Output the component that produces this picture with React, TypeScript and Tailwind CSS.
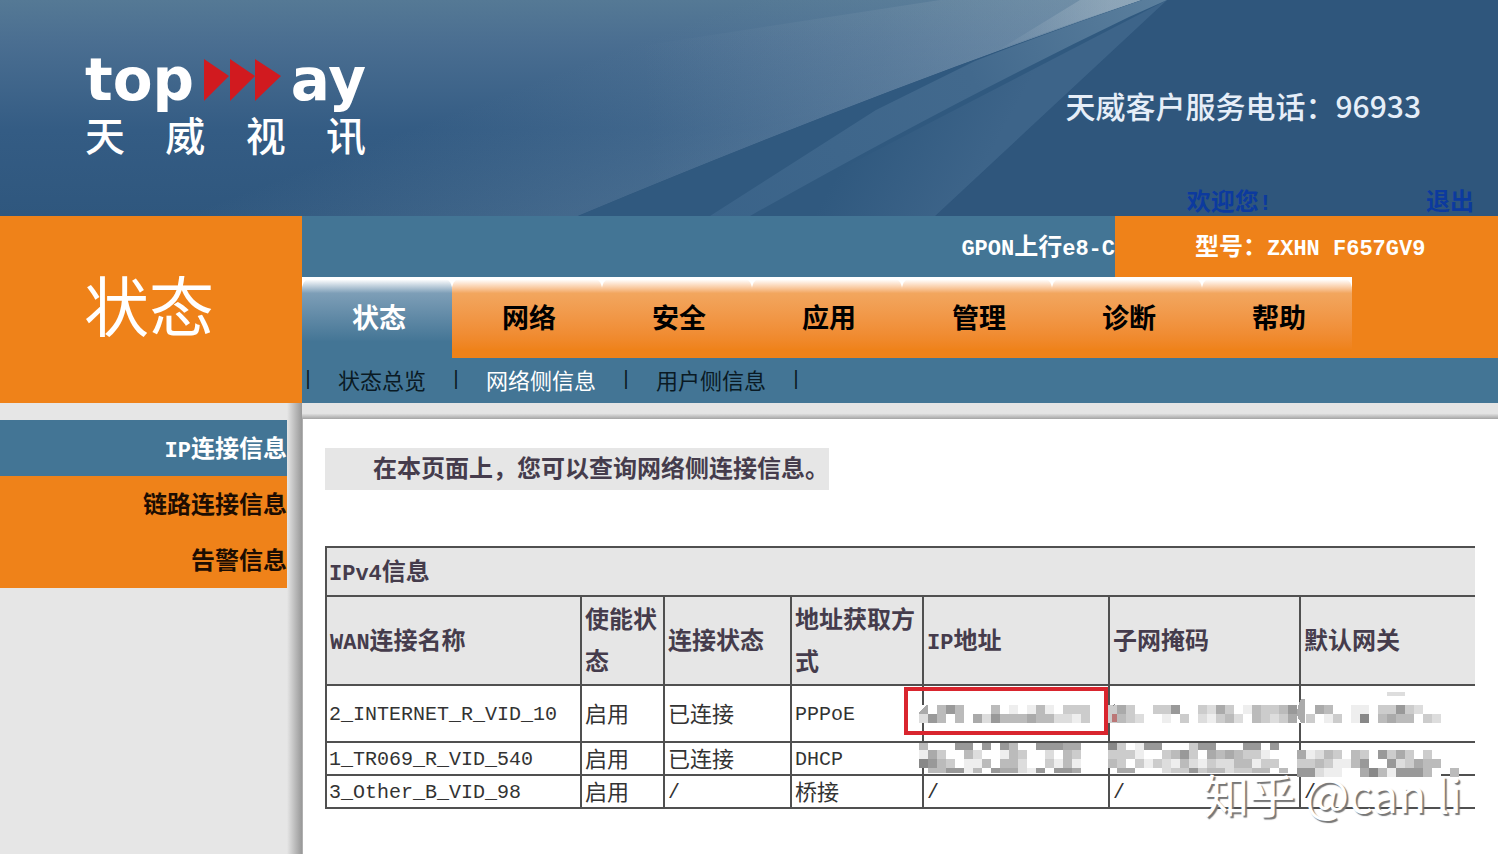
import React from "react";

const ORANGE_TABS = ["网络", "安全", "应用", "管理", "诊断", "帮助"];
const SUB_TABS = ["状态总览", "网络侧信息", "用户侧信息"];
const COLUMNS = ["WAN连接名称", "使能状态", "连接状态", "地址获取方式", "IP地址", "子网掩码", "默认网关"];

const ROWS = [
  { name: "2_INTERNET_R_VID_10", cells: ["启用", "已连接", "PPPoE", "", "", ""], height: "h-[57px]" },
  { name: "1_TR069_R_VID_540", cells: ["启用", "已连接", "DHCP", "", "", ""], height: "h-[33px]" },
  { name: "3_Other_B_VID_98", cells: ["启用", "/", "桥接", "/", "/", "/"], height: "h-[31px]" },
];

/* Each character is the grey level of one redaction tile. */
const TILES = [
  { y: 0, h: 9, data: "afb9bfffbfefebefcccf " + "cacffcc9ffcdacfebccb9ffabffeefcc9cdff" },
  { y: 9, h: 9, data: "d9bfbfad9bbbabbddecf " + "cbcdffefcfdecbdfbcdcafcfecfe8fbabbfcd" },
  { y: 38, h: 7, data: "bfff99f9f9bff999aa   " + "8cfe99fffc99fff99f9f" },
  { y: 45, h: 9, data: "eacffbdffebcffdfbc   " + "ccceffcb9cfababccefffaedbcfbcf9cacfcf" },
  { y: 54, h: 9, data: "89bcfeebfbbdffcebe   " + "bcfcecdebdecddbbeccffccbceeb9ff9dcabb" },
  { y: 63, h: 5, data: " bb99ebf9aade9f99a    " + "aafffdcc9cbbdccbbfb" },
  { y: 63, h: 9, data: "                                          " + "99deeffa8be999bf b" },
];

/** Sets Latin runs in the monospaced face, a step smaller than the Chinese text. */
function Mixed({ text, bold = false }: { text: string; bold?: boolean }) {
  const parts = text.split(/([\x20-\x7e]+)/).filter(Boolean);
  return (
    <span
      className={
        bold
          ? "block text-[24px] leading-[inherit] font-bold"
          : "block text-[22px] leading-[inherit]"
      }
    >
      {parts.map((part, i) =>
        /^[\x20-\x7e]/.test(part) ? (
          <span
            key={i}
            className={
              bold
                ? "font-['Liberation_Mono',monospace] text-[22px] leading-none"
                : "font-['Liberation_Mono',monospace] text-[20px] leading-none"
            }
          >
            {part}
          </span>
        ) : (
          <React.Fragment key={i}>{part}</React.Fragment>
        ),
      )}
    </span>
  );
}

function HeaderArt() {
  return (
    <svg
      className="absolute inset-0 h-full w-full"
      viewBox="0 0 1498 216"
      preserveAspectRatio="none"
      aria-hidden="true"
    >
      <defs>
        <linearGradient id="sky" x1="0" y1="0" x2="0" y2="1">
          <stop offset="0" stopColor="#557995" />
          <stop offset="0.2" stopColor="#4a6e91" />
          <stop offset="0.6" stopColor="#345c84" />
          <stop offset="1" stopColor="#2f577e" />
        </linearGradient>
        <linearGradient id="glow" gradientUnits="userSpaceOnUse" x1="640" y1="60" x2="1120" y2="30">
          <stop offset="0" stopColor="#a4b6c4" stopOpacity="0" />
          <stop offset="0.5" stopColor="#a4b6c4" stopOpacity="0.12" />
          <stop offset="1" stopColor="#a4b6c4" stopOpacity="0.32" />
        </linearGradient>
        <linearGradient id="edge" gradientUnits="userSpaceOnUse" x1="712" y1="14" x2="760" y2="140">
          <stop offset="0" stopColor="#7f9cb5" stopOpacity="0" />
          <stop offset="1" stopColor="#7f9cb5" stopOpacity="0.25" />
        </linearGradient>
        <linearGradient id="flare" gradientUnits="userSpaceOnUse" x1="1000" y1="20" x2="1110" y2="10">
          <stop offset="0" stopColor="#b5c4cf" stopOpacity="0.05" />
          <stop offset="1" stopColor="#b5c4cf" stopOpacity="0.4" />
        </linearGradient>
        <linearGradient id="beam" gradientUnits="userSpaceOnUse" x1="700" y1="216" x2="1160" y2="0">
          <stop offset="0" stopColor="#3a6389" />
          <stop offset="0.6" stopColor="#42698d" />
          <stop offset="1" stopColor="#5b7f9d" />
        </linearGradient>
        <linearGradient id="beam2" gradientUnits="userSpaceOnUse" x1="850" y1="150" x2="960" y2="210">
          <stop offset="0" stopColor="#30597f" />
          <stop offset="1" stopColor="#3d6489" />
        </linearGradient>
      </defs>
      <rect width="1498" height="216" fill="#2f567c" />
      <path d="M0 0H1142Q880 90 578 216H0Z" fill="url(#sky)" />
      <path d="M640 46L940 0H1142Q880 90 578 216Z" fill="url(#glow)" />
      <path d="M0 0H1142Q880 90 578 216H0Z" fill="url(#edge)" />
      <path d="M1000 49L1080 0H1142Q1080 20 1000 49Z" fill="url(#flare)" />
      <path d="M578 216Q880 90 1142 0H1167L935 216Z" fill="#30597f" />
      <path d="M750 216L1167 0L935 216Z" fill="url(#beam2)" />
      <path d="M710 216L876 110L975 61Q1060 28 1142 0H1167L1129 17Q950 103 750 216Z" fill="url(#beam)" />
    </svg>
  );
}

function Logo() {
  return (
    <div className="flex w-[281px] flex-col text-white">
      <div className="flex h-[60px] items-center justify-between font-['DejaVu_Sans',sans-serif] text-[58px] leading-[60px] font-bold">
        <span>top</span>
        <svg className="h-[42px] w-[78px] shrink-0" viewBox="0 0 78 42" aria-hidden="true">
          <path d="M1 0L26 17L1 42ZM27 0L52 17L27 42ZM52 0L78 17L52 42Z" fill="#d11a1f" />
        </svg>
        <span>ay</span>
      </div>
      <div className="flex justify-between text-[40px] leading-[48px] font-medium">
        <span>天</span>
        <span>威</span>
        <span>视</span>
        <span>讯</span>
      </div>
    </div>
  );
}

function Redactions() {
  return (
    <svg
      className="pointer-events-none absolute top-[159px] left-[594px] h-[72px] w-[522px] overflow-visible"
      viewBox="0 0 522 72"
      shapeRendering="crispEdges"
      aria-hidden="true"
    >
      {TILES.map((row, r) =>
        row.data.split("").map((level, c) =>
          level === " " ? null : (
            <rect key={`${r}-${c}`} x={c * 9} y={row.y} width={9} height={row.h} fill={`#${level}${level}${level}`} />
          ),
        ),
      )}
      <path d="M386 -6h-4q-4 8-4 14q0 6 5 10h3z" fill="#aaa" />
      <path d="M198 -4l-4 6v-1z" fill="#888" />
      <rect x="193" y="9" width="5" height="8" fill="#b77" />
      <rect x="468" y="-13" width="18" height="4" fill="#ddd" />
      <path d="M0 0h7L0 8z" fill="#fff" />
    </svg>
  );
}

export default function App() {
  return (
    <div className="relative flex min-h-screen flex-col overflow-hidden bg-[#e6e6e6] font-['Noto_Sans_CJK_SC',sans-serif] text-[#333]">
      <header className="relative h-[216px]">
        <HeaderArt />
        <div className="relative flex h-full flex-col justify-between">
          <div className="flex items-start justify-between pt-[50px] pr-[77px] pl-[85px]">
            <Logo />
            <p className="pt-[34px] text-[30px] leading-[42px] font-medium text-[#e6eef8]">
              天威客户服务电话：96933
            </p>
          </div>
          <div className="flex justify-end gap-[154px] pr-6 leading-6 text-[#0c3a9e]">
            <Mixed text="欢迎您!" bold />
            <a href="#logout">
              <Mixed text="退出" bold />
            </a>
          </div>
        </div>
      </header>

      <div className="grid flex-1 grid-cols-[302px_minmax(0,1fr)] grid-rows-[187px_1fr]">
        <h1 className="flex items-center justify-center bg-[#ef8219] pr-1 pb-3 text-[65px] leading-none font-normal text-white">
          状态
        </h1>

        <div className="flex flex-col bg-[#437595]">
          <div className="flex h-[61px] leading-[58px] text-white">
            <div className="flex-1 text-right">
              <Mixed text="GPON上行e8-C" bold />
            </div>
            <div className="w-[383px] bg-[#ef8219] pl-20">
              <Mixed text="型号：ZXHN F657GV9" bold />
            </div>
          </div>
          <nav className="flex h-[81px] bg-[#ef8219] text-[27px] font-bold">
            <div className="flex bg-white">
              <button className="w-[150px] rounded-t-xl bg-linear-to-b from-white from-3% via-[#7d9eb7] via-20% to-[#437595] to-80% text-white">
                <span className="pl-1">状态</span>
              </button>
              {ORANGE_TABS.map((tab) => (
                <button
                  key={tab}
                  className="w-[150px] rounded-t-xl bg-linear-to-b from-white from-3% via-[#f2a65e] via-20% to-[#ef8219] to-90% text-black"
                >
                  <span className="pl-1">{tab}</span>
                </button>
              ))}
            </div>
          </nav>
          <nav className="flex h-[45px] items-center gap-6 pb-0.5 text-[22px] text-[#0a1a24]">
            <span className="font-['Liberation_Mono',monospace] text-[20px]">|</span>
            {SUB_TABS.map((tab, i) => (
              <React.Fragment key={tab}>
                <a href="#sub" className={i === 1 ? "text-white" : ""}>
                  {tab}
                </a>
                <span className="font-['Liberation_Mono',monospace] text-[20px]">|</span>
              </React.Fragment>
            ))}
          </nav>
        </div>

        <aside className="flex">
          <nav className="flex flex-1 flex-col pt-[17px] text-right leading-[54px]">
            <a href="#ip" className="bg-[#437595] pb-0.5 text-white">
              <Mixed text="IP连接信息" bold />
            </a>
            <a href="#link" className="bg-[#ef8219] pb-0.5 text-[#1c0d02]">
              <Mixed text="链路连接信息" bold />
            </a>
            <a href="#alarm" className="bg-[#ef8219] pb-0.5 text-[#1c0d02]">
              <Mixed text="告警信息" bold />
            </a>
          </nav>
          <div className="w-[15px] bg-linear-to-r from-[#e6e6e6] to-[#989898]" />
        </aside>

        <main className="flex flex-col">
          <div className="h-4 bg-linear-to-b from-[#e4e4e4] from-65% to-[#a4a4a4]" />
          <div className="flex-1 border-l border-[#b0b0b0] bg-white pt-[29px] pr-[23px] pl-[22px]">
            <p className="h-[42px] w-fit bg-[#e6e6e6] pl-12 leading-[38px] text-[#453c4c]">
              <Mixed text="在本页面上，您可以查询网络侧连接信息。" bold />
            </p>
            <div className="relative mt-14">
              <table className="w-full table-fixed border-collapse border-2 border-r-0 border-[#505050] text-left">
                <colgroup>
                  <col className="w-[255px]" />
                  <col className="w-[83px]" />
                  <col className="w-[127px]" />
                  <col className="w-[132px]" />
                  <col className="w-[186px]" />
                  <col className="w-[191px]" />
                  <col />
                </colgroup>
                <thead className="bg-[#e6e6e6] text-[#453c4c]">
                  <tr className="h-[49px]">
                    <th colSpan={7} className="pb-1 pl-0.5 leading-10">
                      <Mixed text="IPv4信息" bold />
                    </th>
                  </tr>
                  <tr className="h-[89px]">
                    {COLUMNS.map((label) => (
                      <th
                        key={label}
                        className="border-2 border-r-0 border-[#505050] pt-0 pb-[3px] pl-[3px] leading-[42px]"
                      >
                        <Mixed text={label} bold />
                      </th>
                    ))}
                  </tr>
                </thead>
                <tbody className="leading-6">
                  {ROWS.map((row) => (
                    <tr key={row.name} className={row.height}>
                      <td className="border-2 border-[#505050] pt-0 pb-1 pl-0.5 whitespace-nowrap">
                        <Mixed text={row.name} />
                      </td>
                      {row.cells.map((cell, i) => (
                        <td key={i} className="border-2 border-r-0 border-[#505050] pt-0 pb-1 pl-[3px]">
                          <Mixed text={cell} />
                        </td>
                      ))}
                    </tr>
                  ))}
                </tbody>
              </table>
              <Redactions />
              <div className="pointer-events-none absolute top-[141px] left-[579px] h-12 w-[204px] border-4 border-[#d9252e]" />
              <div className="pointer-events-none absolute right-[13px] bottom-[-14px] text-[46px] leading-[60px] whitespace-nowrap text-white [text-shadow:2px_2px_1px_#777]">
                知乎 @can li
              </div>
            </div>
          </div>
        </main>
      </div>
    </div>
  );
}
